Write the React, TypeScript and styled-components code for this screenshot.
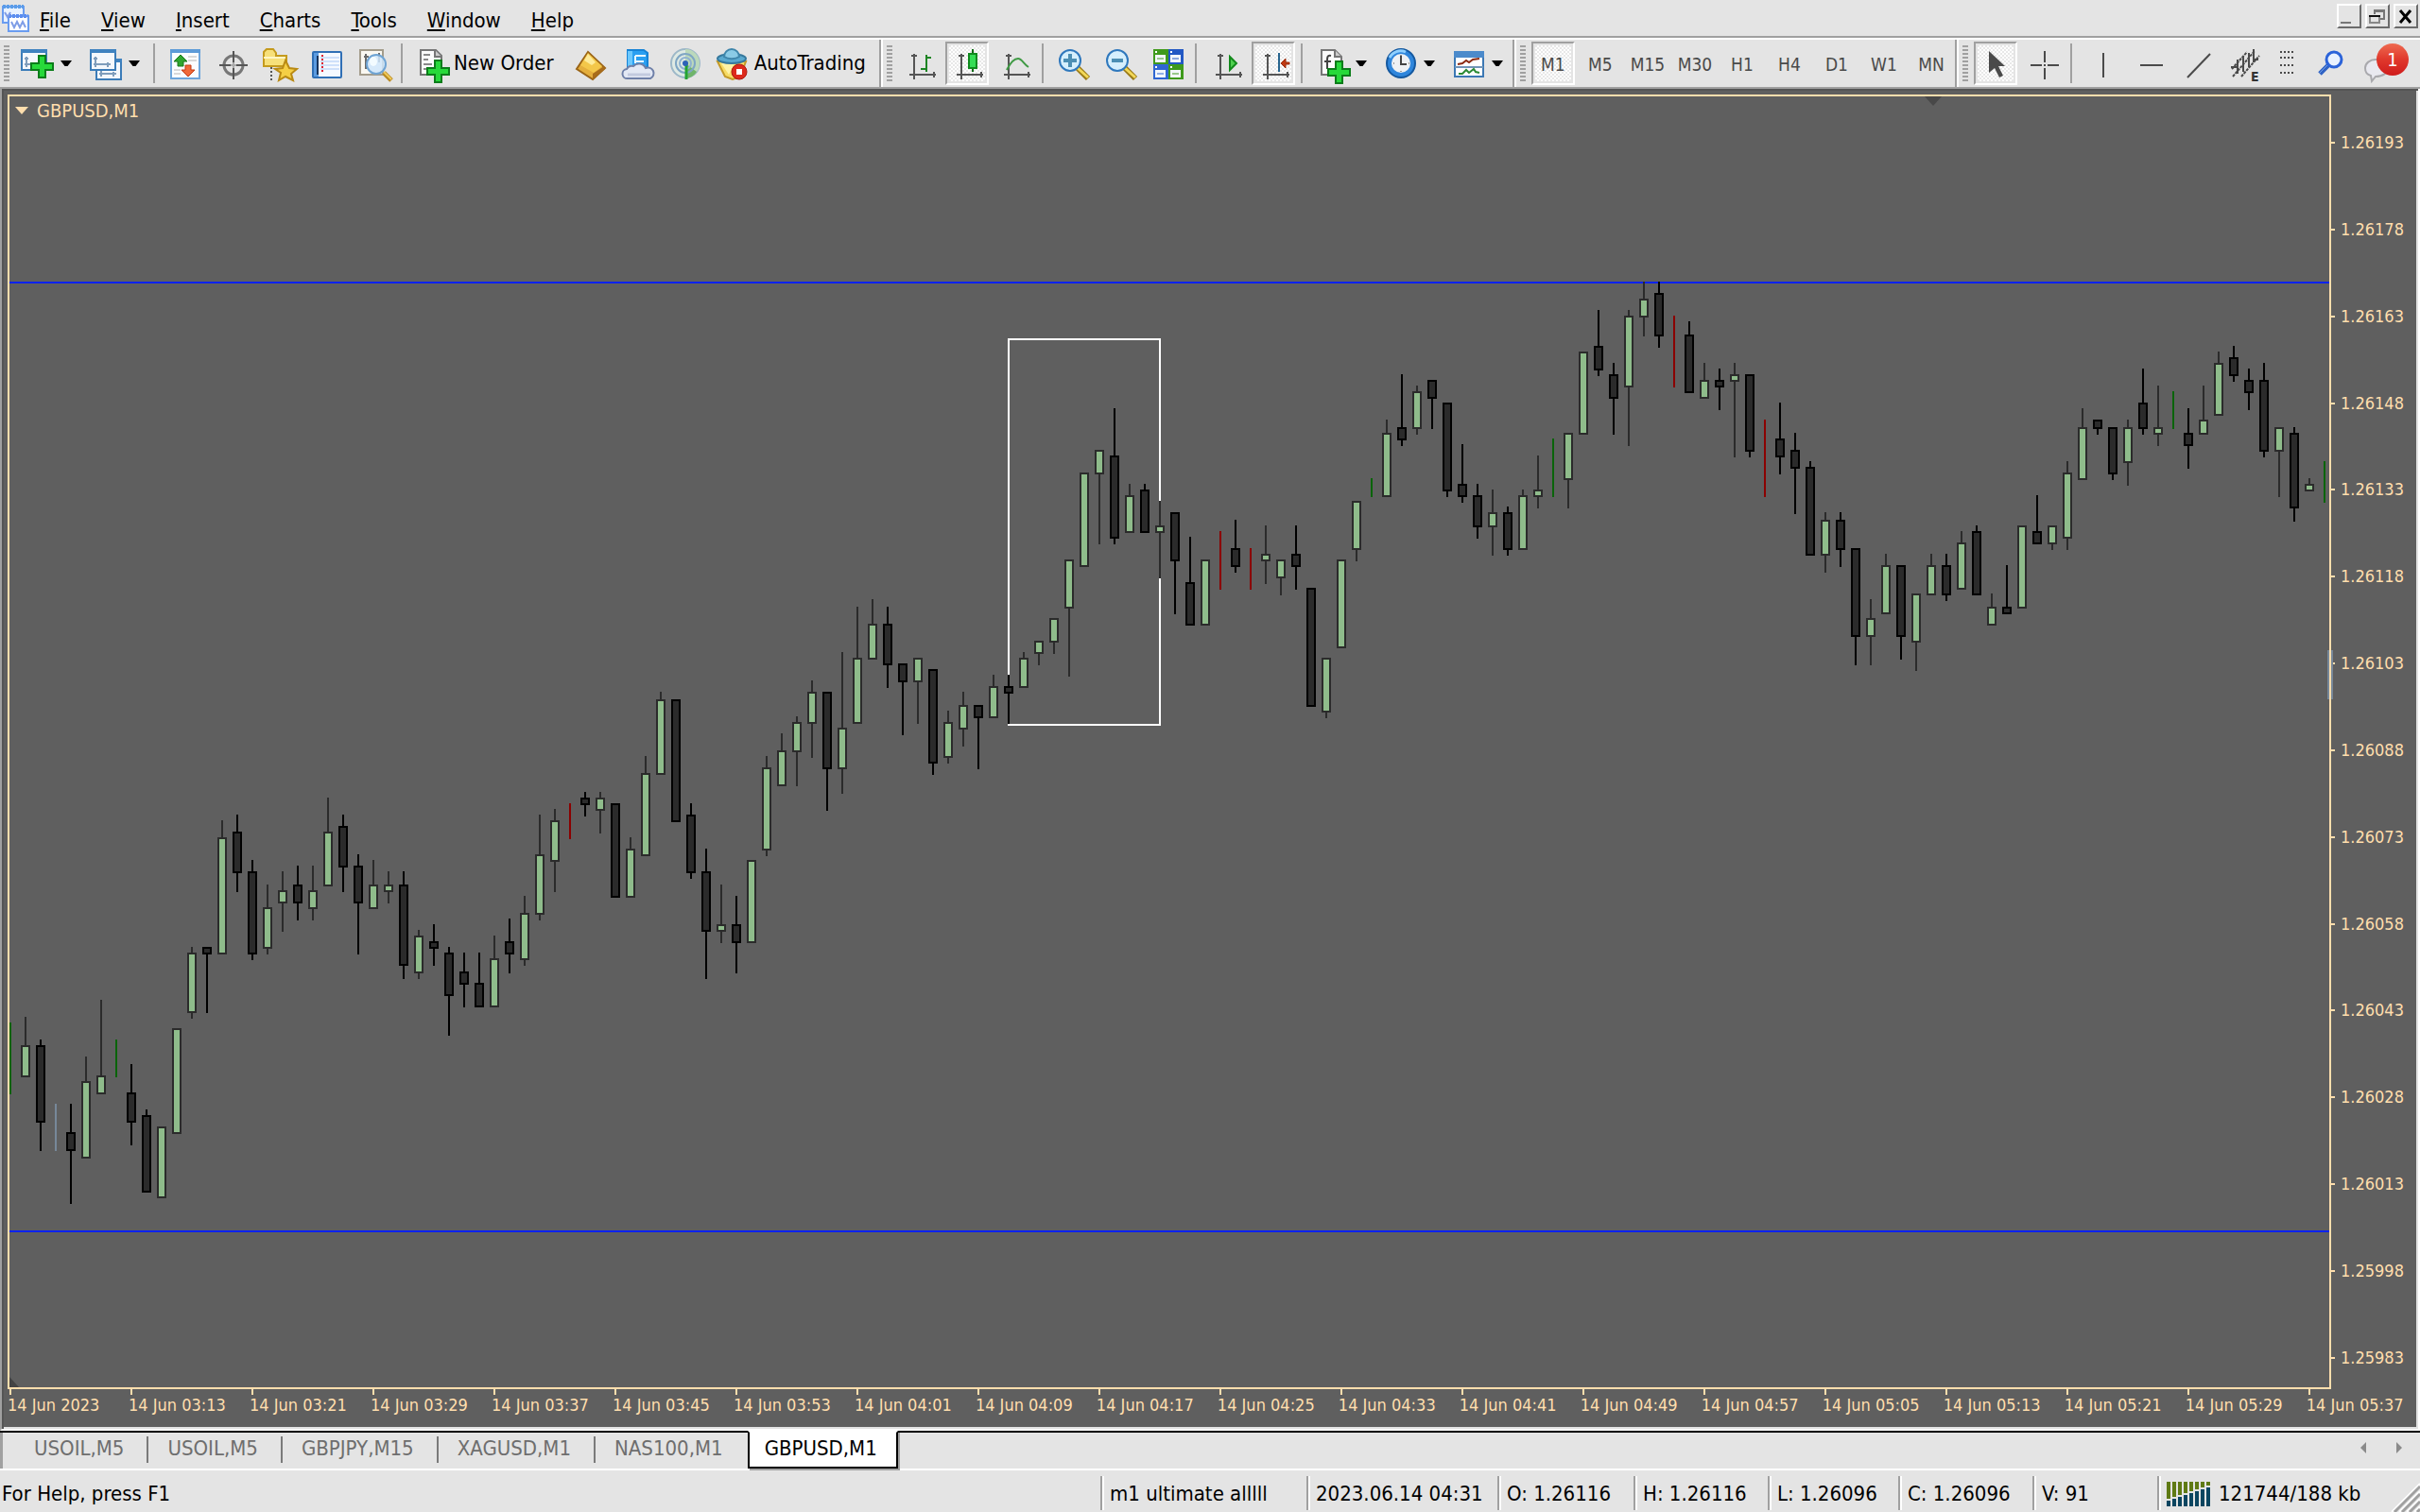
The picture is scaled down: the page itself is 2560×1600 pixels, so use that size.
import React from "react";
import styled, { createGlobalStyle, css } from "styled-components";

const C = {
  face: "#e4e4e4",
  shade: "#a0a0a0",
  chart: "#5f5f5f",
  axis: "#ffdead",
  blue: "#0c22f0",
  bull: "#8fbc8b",
  ink: "#2b2b2b",
};

const Global = createGlobalStyle`
  * { box-sizing: border-box; }
  html, body { margin: 0; height: 100%; }
  body { overflow: hidden; background: ${C.face}; }
  #root { height: 100%; }
  button { font: inherit; color: inherit; }
`;

const Terminal = styled.div`
  display: flex;
  flex-direction: column;
  height: 100vh;
  background: ${C.face};
  color: #000;
  font-family: "DejaVu Sans Condensed", "DejaVu Sans", sans-serif;
  font-size: 22px;
  line-height: 24px;
`;

/* ---------- menu bar ---------- */

const MenuBar = styled.header`
  display: flex;
  align-items: center;
  height: 42px;
  padding: 0 2px 0 1px;
  border-bottom: 2px solid #fff;
  box-shadow: inset 0 -2px 0 ${C.shade};
`;

const MenuList = styled.nav`
  display: flex;
  gap: 32px;
  margin-left: 11px;
  padding-top: 4px;
`;

const MenuItem = styled.button`
  padding: 0;
  border: 0;
  background: none;
  u {
    text-decoration-thickness: 2px;
    text-underline-offset: 2px;
    text-decoration-skip-ink: none;
  }
`;

const WindowButtons = styled.div`
  display: flex;
  gap: 4px;
  margin: 0 0 6px auto;
`;

const WindowButton = styled.button`
  width: 26px;
  height: 26px;
  padding: 0;
  border: 2px solid;
  border-color: #fff #6b6b6b #6b6b6b #fff;
  background: ${C.face};
  svg { display: block; }
`;

/* ---------- toolbar ---------- */

const ToolBar = styled.div`
  display: flex;
  align-items: center;
  height: 52px;
  border-bottom: 2px solid ${C.shade};
`;

const Group = styled.div<{ $last?: boolean }>`
  flex: none;
  display: flex;
  align-items: center;
  height: 50px;
  padding-left: 4px;
  ${(p) =>
    !p.$last &&
    css`
      border-right: 2px solid #fff;
      box-shadow: inset -2px 0 0 ${C.shade};
      padding-right: 2px;
    `}
`;

const Grip = styled.span`
  flex: none;
  width: 6px;
  height: 38px;
  margin-right: 4px;
  background: repeating-linear-gradient(${C.shade} 0 2px, transparent 2px 4px);
`;

const Divider = styled.span`
  flex: none;
  width: 2px;
  height: 42px;
  margin: 0 6px 0 4px;
  background: ${C.shade};
`;

const pressed = css`
  border-color: ${C.shade} #fff #fff ${C.shade};
  background: repeating-conic-gradient(#fff 0 25%, #e8e8e8 0 50%) 0 0 / 4px 4px;
  box-shadow: inset 0 0 0 2px ${C.face};
`;

const Tool = styled.button<{ $on?: boolean; $narrow?: boolean }>`
  flex: none;
  display: flex;
  align-items: center;
  justify-content: center;
  width: ${(p) => (p.$narrow ? 36 : 46)}px;
  height: 46px;
  margin: 0 2px;
  padding: 2px 0 0;
  border: 2px solid transparent;
  background: none;
  color: #4a4a4a;
  font-size: 19px;
  svg { margin-top: -2px; }
  ${(p) => p.$on && pressed}
`;

const DropTool = styled.button`
  flex: none;
  display: flex;
  align-items: center;
  gap: 4px;
  width: 72px;
  height: 46px;
  padding: 0 0 0 6px;
  border: 0;
  background: none;
`;

const TextTool = styled.button`
  flex: none;
  display: flex;
  align-items: center;
  height: 46px;
  padding: 0 14px 0 8px;
  border: 0;
  background: none;
`;

const Corner = styled.div`
  display: flex;
  align-items: center;
  margin-left: auto;
`;

const ChatTool = styled.button`
  position: relative;
  width: 70px;
  height: 46px;
  padding: 0 0 0 8px;
  border: 0;
  background: none;
  text-align: left;
`;

const Badge = styled.span`
  position: absolute;
  left: 24px;
  top: 2px;
  width: 34px;
  height: 34px;
  border-radius: 50%;
  background: linear-gradient(#ee6a50, #e0382c 50%, #cf1c1c);
  color: #fff;
  font-size: 20px;
  line-height: 34px;
  text-align: center;
`;

const Svg = styled.svg`
  flex: none;
  display: block;
  overflow: visible;
`;

/* ---------- chart ---------- */

const ChartWindow = styled.main`
  flex: 1;
  min-height: 0;
  display: grid;
  grid-template-columns: minmax(0, 1fr) 92px;
  grid-template-rows: minmax(0, 1fr) 42px;
  padding: 6px 0 0 4px;
  border: solid;
  border-width: 0 2px 2px 2px;
  border-color: #fff #fff #fff ${C.shade};
  background: ${C.chart};
  box-shadow: inset 2px 2px 0 #555, inset -2px -2px 0 #e3e3e3;
  color: ${C.axis};
  font-size: 18px;
`;

const Plot = styled.section`
  position: relative;
  z-index: 1;
  margin-left: 2px;
  border: 2px solid ${C.axis};
`;

const PlotSvg = styled.svg`
  display: block;
  width: 100%;
  height: 100%;
  overflow: visible;
`;

const PlotTitle = styled.h1`
  position: absolute;
  left: 6px;
  top: 3px;
  display: flex;
  align-items: center;
  gap: 9px;
  margin: 0;
  font-size: 20px;
  font-weight: 400;
  line-height: 24px;
`;

const PriceAxis = styled.ol`
  display: flex;
  flex-direction: column;
  justify-content: space-between;
  margin: 0;
  padding: 39px 0 21px;
  list-style: none;
`;

const Price = styled.li`
  display: flex;
  align-items: center;
  gap: 6px;
  height: 24px;
  &::before {
    content: "";
    width: 4px;
    height: 2px;
    background: ${C.axis};
  }
`;

const TimeAxis = styled.ol`
  grid-column: 1 / -1;
  display: flex;
  margin: 0;
  padding: 0 0 0 2px;
  list-style: none;
`;

const Time = styled.li`
  flex: 0 0 calc((100% - 96px) * 128 / 2454);
  line-height: 22px;
  white-space: nowrap;
  &:last-child { flex-basis: auto; }
  &::before {
    content: "";
    display: block;
    width: 2px;
    height: 6px;
    margin-left: 2px;
    background: ${C.axis};
  }
`;

/* ---------- tabs and status ---------- */

const TabBar = styled.div`
  display: flex;
  align-items: flex-start;
  height: 42px;
  padding: 0 14px 0 16px;
  border-top: 2px solid #000;
  border-bottom: 2px solid #fff;
  box-shadow: inset 4px 0 0 -1px ${C.shade};
`;

const Tab = styled.button<{ $active?: boolean; $rule?: boolean }>`
  height: 28px;
  margin-top: 4px;
  padding: 0 24px 2px 20px;
  border: 0;
  border-right: 2px solid ${(p) => (p.$rule ? "#7a7a7a" : "transparent")};
  background: none;
  color: #6e6e6e;
  line-height: 24px;
  ${(p) =>
    p.$active &&
    css`
      height: 40px;
      margin-top: -2px;
      padding: 4px 20px 6px 16px;
      border: 2px solid #000;
      border-top-color: #fff;
      background: #fff;
      color: #000;
      box-shadow: 2px 2px 0 ${C.shade};
    `}
`;

const Pager = styled.div`
  display: flex;
  gap: 22px;
  margin-left: auto;
  padding-top: 10px;
`;

const PagerButton = styled.button`
  width: 16px;
  height: 12px;
  padding: 0;
  border: 0;
  background: none;
  display: flex;
  justify-content: center;
`;

const StatusBar = styled.footer`
  display: flex;
  align-items: center;
  height: 44px;
  padding-left: 2px;
`;

const StatusCell = styled.span<{ $w: number }>`
  flex: none;
  display: flex;
  align-items: center;
  gap: 9px;
  width: ${(p) => p.$w}px;
  height: 36px;
  margin-top: 4px;
  padding: 2px 0 0 8px;
  border-left: 2px solid ${C.shade};
  box-shadow: inset 2px 0 0 #fff;
  white-space: nowrap;
`;

const StatusHint = styled.span`
  flex: 1;
  padding-top: 6px;
`;

const SizeGrip = styled(Svg)`
  align-self: flex-end;
  margin-left: auto;
`;

/* ---------- data ---------- */

type Bar = [string, number, number, number, number];

/* u: rising, d: falling, G/R/S: plain line in green, red, slate.
   [kind, high, body top, body bottom, low] */
const bars: Bar[] = [
  ["G", 541, 0, 0, 579], ["u", 538, 553, 570, 570], ["d", 550, 553, 594, 609], ["S", 584, 0, 0, 609],
  ["d", 584, 599, 609, 637], ["u", 559, 572, 613, 613], ["u", 529, 569, 579, 579], ["G", 550, 0, 0, 570],
  ["d", 563, 578, 594, 606], ["d", 587, 590, 631, 631], ["u", 596, 596, 634, 634], ["u", 544, 544, 600, 600],
  ["u", 501, 504, 536, 539], ["d", 501, 501, 505, 536], ["u", 434, 443, 505, 505], ["d", 431, 440, 462, 472],
  ["d", 455, 461, 505, 508], ["u", 468, 480, 502, 505], ["u", 461, 471, 478, 493], ["d", 458, 468, 478, 487],
  ["u", 458, 471, 481, 487], ["u", 422, 440, 469, 469], ["d", 431, 437, 459, 472], ["d", 452, 458, 478, 505],
  ["u", 455, 468, 481, 481], ["u", 461, 468, 472, 478], ["d", 461, 468, 511, 518], ["u", 492, 495, 515, 518],
  ["d", 489, 498, 502, 511], ["d", 501, 504, 527, 548], ["d", 504, 514, 521, 533], ["d", 504, 520, 533, 533],
  ["u", 495, 507, 533, 533], ["d", 486, 498, 505, 515], ["u", 474, 483, 508, 511], ["u", 431, 452, 484, 487],
  ["u", 428, 434, 456, 472], ["R", 425, 0, 0, 444], ["d", 419, 422, 426, 432], ["u", 419, 422, 429, 441],
  ["d", 425, 425, 475, 475], ["u", 443, 449, 475, 475], ["u", 400, 409, 453, 453], ["u", 366, 370, 410, 410],
  ["d", 370, 370, 435, 435], ["d", 425, 431, 462, 465], ["d", 449, 461, 493, 518], ["u", 468, 489, 493, 499],
  ["d", 474, 489, 499, 515], ["u", 455, 455, 499, 499], ["u", 400, 406, 450, 453], ["u", 388, 397, 416, 416],
  ["u", 379, 382, 398, 416], ["u", 360, 366, 383, 401], ["d", 366, 366, 407, 429], ["u", 345, 385, 407, 420],
  ["u", 321, 348, 383, 383], ["u", 317, 330, 349, 349], ["d", 321, 330, 352, 364], ["d", 351, 351, 361, 389],
  ["u", 348, 348, 361, 383], ["d", 354, 354, 404, 410], ["u", 376, 382, 401, 404], ["u", 366, 373, 386, 395],
  ["d", 373, 373, 380, 407], ["u", 357, 363, 380, 380], ["d", 357, 363, 367, 383], ["u", 345, 348, 364, 364],
  ["u", 339, 339, 346, 352], ["u", 327, 327, 340, 346], ["u", 296, 296, 322, 358], ["u", 250, 250, 300, 300],
  ["u", 238, 238, 251, 288], ["d", 216, 241, 285, 288], ["u", 256, 262, 282, 282], ["d", 256, 259, 282, 282],
  ["u", 265, 278, 282, 306], ["d", 271, 271, 297, 325], ["d", 284, 308, 331, 331], ["u", 296, 296, 331, 331],
  ["R", 281, 0, 0, 312], ["d", 275, 290, 300, 303], ["R", 290, 0, 0, 312], ["u", 278, 293, 297, 309],
  ["u", 296, 296, 306, 315], ["d", 278, 293, 300, 312], ["d", 311, 311, 374, 374], ["u", 348, 348, 377, 380],
  ["u", 296, 296, 343, 343], ["u", 265, 265, 291, 297], ["G", 253, 0, 0, 263], ["u", 222, 229, 263, 263],
  ["d", 198, 226, 233, 236], ["u", 204, 207, 227, 230], ["d", 201, 201, 211, 227], ["d", 213, 213, 260, 263],
  ["d", 235, 256, 263, 266], ["d", 256, 262, 279, 285], ["u", 259, 271, 279, 294], ["d", 268, 271, 291, 294],
  ["u", 259, 262, 291, 291], ["u", 241, 259, 263, 269], ["G", 232, 0, 0, 263], ["u", 229, 229, 254, 269],
  ["u", 186, 186, 230, 230], ["d", 164, 183, 196, 199], ["d", 192, 198, 211, 230], ["u", 164, 167, 205, 236],
  ["u", 149, 158, 168, 178], ["d", 149, 155, 178, 184], ["R", 167, 0, 0, 205], ["d", 170, 177, 208, 208],
  ["u", 192, 201, 211, 211], ["d", 195, 201, 205, 217], ["u", 192, 198, 202, 242], ["d", 198, 198, 239, 242],
  ["R", 222, 0, 0, 263], ["d", 213, 232, 242, 251], ["d", 229, 238, 248, 272], ["d", 244, 247, 294, 294],
  ["u", 271, 275, 294, 303], ["d", 271, 275, 291, 300], ["d", 290, 290, 337, 352], ["u", 317, 327, 337, 352],
  ["u", 293, 299, 325, 325], ["d", 299, 299, 337, 349], ["u", 314, 314, 340, 355], ["u", 293, 299, 315, 315],
  ["d", 293, 299, 315, 318], ["u", 281, 287, 312, 312], ["d", 278, 281, 315, 315], ["u", 314, 321, 331, 331],
  ["d", 299, 321, 325, 325], ["u", 278, 278, 322, 322], ["d", 262, 281, 288, 288], ["u", 278, 278, 288, 291],
  ["u", 244, 250, 285, 291], ["u", 216, 226, 254, 254], ["d", 222, 222, 227, 230], ["d", 226, 226, 251, 254],
  ["u", 222, 226, 245, 257], ["d", 195, 213, 227, 230], ["u", 204, 226, 230, 236], ["G", 207, 0, 0, 227],
  ["d", 216, 229, 236, 248], ["u", 204, 222, 230, 230], ["u", 186, 192, 220, 220], ["d", 183, 189, 199, 202],
  ["d", 195, 201, 208, 217], ["d", 192, 201, 239, 242], ["u", 226, 226, 239, 263], ["d", 226, 229, 269, 276],
  ["u", 253, 256, 260, 260], ["G", 244, 0, 0, 266],
];

const lineColor: Record<string, string> = { G: "#0a640a", R: "#8b0000", S: "#778899", u: C.ink, d: "#000" };

const prices = Array.from({ length: 15 }, (_, i) => ((126193 - 15 * i) / 100000).toFixed(5));

const times = Array.from({ length: 20 }, (_, i) => {
  if (i === 0) return "14 Jun 2023";
  const m = 185 + 8 * i;
  return `14 Jun 0${Math.floor(m / 60)}:${String(m % 60).padStart(2, "0")}`;
});

const menus = ["File", "View", "Insert", "Charts", "Tools", "Window", "Help"];
const frames = ["M1", "M5", "M15", "M30", "H1", "H4", "D1", "W1", "MN"];
const tabs = ["USOIL,M5", "USOIL,M5", "GBPJPY,M15", "XAGUSD,M1", "NAS100,M1", "GBPUSD,M1"];
const cells: [string, number][] = [
  ["m1 ultimate alllll", 218],
  ["2023.06.14 04:31", 202],
  ["O: 1.26116", 144],
  ["H: 1.26116", 142],
  ["L: 1.26096", 138],
  ["C: 1.26096", 142],
  ["V: 91", 132],
];

/* ---------- icons ---------- */

const Icon = ({ children }: { children: React.ReactNode }) => (
  <Svg width="40" height="40" viewBox="0 0 40 40" fill="none" aria-hidden="true">
    {children}
  </Svg>
);

const Caret = () => (
  <Svg width="12" height="6" viewBox="0 0 12 6" aria-hidden="true">
    <path d="M0 0h12l-4.500 6h-3z" fill="#000" />
  </Svg>
);

const Plus = ({ x, y }: { x: number; y: number }) => (
  <path
    transform={`translate(${x} ${y})`}
    d="M8 1h7v8h8v7h-8v8H8v-8H0V9h8z"
    fill="#27d93a"
    stroke="#0b7d1a"
    strokeWidth="2"
  />
);

const Pane = ({ x, y }: { x: number; y: number }) => (
  <g transform={`translate(${x} ${y})`}>
    <rect x="1" y="1" width="26" height="21" fill="#f4f8fc" stroke="#3b7cb8" strokeWidth="2" />
    <rect x="0" y="0" width="28" height="4" fill="#3f83c0" />
    <path d="M6 8v11M4 10h4M4 16h18M19 14v5" stroke="#7f9dbb" strokeWidth="2" />
  </g>
);

const Axes = () => (
  <g stroke="#555" strokeWidth="2">
    <path d="M14 10v27M9 32h28" />
    <path d="M11 12h6M35 29v6" />
  </g>
);

const NewChart = () => (
  <Icon>
    <Pane x={2} y={5} />
    <Plus x={13} y={11} />
  </Icon>
);

const Profiles = () => (
  <Icon>
    <Pane x={9} y={15} />
    <Pane x={3} y={5} />
  </Icon>
);

const MarketWatch = () => (
  <Icon>
    <rect x="6" y="6" width="30" height="30" fill="#fbfdff" stroke="#6ea6dc" strokeWidth="2" />
    <rect x="5" y="5" width="32" height="4" fill="#5d9bd8" />
    <path d="M24 13h9M24 17h9M9 27h7M9 31h7" stroke="#d9d9d9" strokeWidth="2" />
    <path d="M16 11l7 7h-4v5h-6v-5H9z" fill="#2fa52f" stroke="#187818" />
    <path d="M24 34l7-7h-4v-5h-6v5h-4z" fill="#f0693a" stroke="#c23a12" />
  </Icon>
);

const Navigator = () => (
  <Icon>
    <circle cx="22" cy="22" r="10" stroke="#777" strokeWidth="3" />
    <path d="M22 7v12M22 25v12M7 22h12M25 22h12" stroke="#555" strokeWidth="2" />
    <path d="M19 22h6M22 19v6" stroke="#aaa" strokeWidth="2" />
  </Icon>
);

const Folder = () => (
  <Icon>
    <path d="M12 24v14" stroke="#555" strokeWidth="2" strokeDasharray="2 2" />
    <path d="M4 23V8l3-3h7l3 4v3h11v11z" fill="#f7e07a" stroke="#c59b1d" strokeWidth="2" />
    <path d="M4 14h23" stroke="#fff6c4" strokeWidth="2" />
    <path d="M27 17l4 8 8 1-6 5 2 7-8-4-7 4 2-8-6-4 8-1z" fill="#f5cf45" stroke="#b98a14" strokeWidth="2" />
  </Icon>
);

const DataWindow = () => (
  <Icon>
    <rect x="6" y="8" width="30" height="27" rx="1" fill="#f5f9ff" stroke="#2f6fb5" strokeWidth="2" />
    <rect x="7" y="9" width="5" height="25" fill="#5b9be0" />
    <path d="M14 14h20M14 18h20M14 22h20M14 26h20" stroke="#cfe0fa" strokeWidth="2" />
    <path d="M16 11v18" stroke="#d23" strokeWidth="2" strokeDasharray="2 2" />
    <path d="M11 12v20" stroke="#16335c" strokeWidth="2" />
  </Icon>
);

const Tester = () => (
  <Icon>
    <rect x="6" y="6" width="24" height="26" fill="#faf8f2" stroke="#a39c8b" strokeWidth="2" />
    <path d="M12 10v16M26 9v10M10 13h5" stroke="#6a6a6a" strokeWidth="2" />
    <path d="M31 30l8 8" stroke="#b88a22" strokeWidth="5" />
    <path d="M31 29l8 8" stroke="#f0c95a" strokeWidth="2" />
    <circle cx="23" cy="21" r="10" fill="#cfe6fb" fillOpacity=".85" stroke="#6fa4d4" strokeWidth="2" />
    <ellipse cx="20" cy="18" rx="4" ry="5" fill="#f3fbff" />
  </Icon>
);

const NewOrder = () => (
  <Icon>
    <path d="M5 6h16l6 6v20H5z" fill="#fcfcfc" stroke="#777" strokeWidth="2" />
    <path d="M20 6v7h7" fill="#ccc" stroke="#777" strokeWidth="2" />
    <path d="M8 11h7M8 16h5M8 21h9M8 26h4" stroke="#8a8a8a" strokeWidth="2" />
    <Plus x={12} y={16} />
  </Icon>
);

const Gold = () => (
  <Icon>
    <path d="M17 8l18 17-13 12L5 26z" fill="#e4ae3c" stroke="#9a6416" strokeWidth="2" />
    <path d="M17 9l15 14-9 7L9 22z" fill="#f3c74a" />
    <path d="M17 10l8 9-4 3-8-5z" fill="#fdeb9a" />
    <path d="M22 31l12-8 1 3-13 11z" fill="#a86c1b" />
  </Icon>
);

const Server = () => (
  <Icon>
    <path d="M9 6h17l4 3v15H9z" fill="#2aa0f2" stroke="#1683d6" strokeWidth="2" />
    <path d="M9 7h5v17H9z" fill="#6cc8fd" />
    <path d="M17 12h11M17 18h9M17 12v8" stroke="#e6f7ff" strokeWidth="2" />
    <path
      d="M9 36a5 5 0 01-1-10 6 6 0 017-3 8 8 0 0113 2 6 6 0 015 11z"
      fill="#e3e8f4"
      stroke="#6f80a8"
      strokeWidth="2"
    />
    <path d="M9 32h24" stroke="#c2cade" strokeWidth="3" />
  </Icon>
);

const Signal = () => (
  <Icon>
    <circle cx="20" cy="20" r="15" fill="#dfeae4" stroke="#9db8c8" strokeWidth="2" />
    <path d="M20 5a15 15 0 010 30z" fill="#bcd9bb" />
    <path d="M20 20l12 9a15 15 0 01-12 7z" fill="#6fb56a" />
    <circle cx="20" cy="20" r="10" stroke="#7fa6c4" strokeWidth="2" />
    <circle cx="20" cy="20" r="6" stroke="#8fb2d0" strokeWidth="2" />
    <path d="M21 20v17" stroke="#23a432" strokeWidth="3" />
    <circle cx="20" cy="20" r="3" fill="#2d62b8" />
  </Icon>
);

const AutoTrade = () => (
  <Icon>
    <path d="M1 18h30l-6 16-8 3-8-3z" fill="#f7dc64" stroke="#c49a28" strokeWidth="2" />
    <path d="M5 20h14l-6 12z" fill="#fdf2a6" />
    <ellipse cx="16" cy="15" rx="15" ry="5" fill="#5aa9cf" stroke="#35789c" strokeWidth="2" />
    <path d="M8 13a8 8 0 0116 0c-4 3-12 3-16 0z" fill="#8bcbe6" stroke="#3f86ab" strokeWidth="2" />
    <circle cx="24" cy="29" r="8" fill="#dd2a1c" stroke="#ab1810" />
    <rect x="21" y="26" width="6" height="6" fill="#fff" />
  </Icon>
);

const BarsIcon = () => (
  <Icon>
    <Axes />
    <path d="M27 11v18M27 14h5M21 26h6" stroke="#1d8423" strokeWidth="2" />
  </Icon>
);

const CandleIcon = () => (
  <Icon>
    <Axes />
    <path d="M26 5v24" stroke="#0d6c14" strokeWidth="2" />
    <rect x="22" y="10" width="8" height="15" fill="#35dd55" stroke="#108a1e" strokeWidth="2" />
  </Icon>
);

const LineIcon = () => (
  <Icon>
    <Axes />
    <path d="M12 27c4-8 8-12 12-12s6 6 11 9" stroke="#3f9a44" strokeWidth="2" />
  </Icon>
);

const Zoom = ({ plus }: { plus?: boolean }) => (
  <Icon>
    <path d="M25 25l11 11" stroke="#9a7a16" strokeWidth="6" />
    <path d="M25 25l11 10" stroke="#f3d858" strokeWidth="3" />
    <circle cx="17" cy="17" r="11" fill="#d5effd" stroke="#2f78bd" strokeWidth="2" />
    <path d={plus ? "M10 17h14M17 10v14" : "M11 17h12"} stroke="#4c8fb4" strokeWidth="4" />
  </Icon>
);

const Tile = () => (
  <Icon>
    {[
      [5, 5, "#3f9a1c"],
      [21, 5, "#2258c4"],
      [5, 21, "#2f66d2"],
      [21, 21, "#3f9a1c"],
    ].map(([x, y, f]) => (
      <g key={`${x}-${y}`} transform={`translate(${x} ${y})`}>
        <rect width="16" height="16" fill={f as string} />
        <rect x="2" y="6" width="11" height="8" fill="#f2f6fb" />
        <path d="M4 10h7" stroke={f as string} strokeOpacity=".5" strokeWidth="2" />
        <path d="M2 3h2" stroke="#fff" strokeWidth="2" />
      </g>
    ))}
  </Icon>
);

const ScrollIcon = () => (
  <Icon>
    <Axes />
    <path d="M24 13l7 7-7 7z" fill="#4fd04f" stroke="#138a1c" strokeWidth="2" />
  </Icon>
);

const ShiftIcon = () => (
  <Icon>
    <Axes />
    <path d="M26 9v20" stroke="#28658f" strokeWidth="2" />
    <path d="M28 20l5-5v4h4v2h-4v4z" fill="#c03a12" stroke="#9c2c0a" />
  </Icon>
);

const Indicator = () => (
  <Icon>
    <path d="M8 6h14l7 7v19H8z" fill="#fcfcfc" stroke="#777" strokeWidth="2" />
    <path d="M22 6v7h7" fill="#ccc" stroke="#777" strokeWidth="2" />
    <path d="M18 12c-4-1-4 2-4 5v9M11 18h7" stroke="#444" strokeWidth="2" />
    <Plus x={15} y={17} />
  </Icon>
);

const Clock = () => (
  <Icon>
    <circle cx="20" cy="20" r="15" fill="#2f86dc" stroke="#14589f" strokeWidth="2" />
    <path d="M8 14a13 13 0 0117-6" stroke="#8fd0ff" strokeWidth="3" />
    <circle cx="20" cy="20" r="10" fill="#eef1f4" />
    <path d="M20 12v9h6" stroke="#444" strokeWidth="2" />
    <path d="M20 11v1M20 28v1M12 20h1M28 20h1" stroke="#999" strokeWidth="2" />
  </Icon>
);

const Template = () => (
  <Icon>
    <rect x="5" y="8" width="30" height="26" fill="#fff" stroke="#3c78b4" strokeWidth="2" />
    <rect x="4" y="7" width="32" height="7" fill="#4b8acb" />
    <path d="M5 24h30" stroke="#7295b8" strokeWidth="2" />
    <path d="M8 21l5-1 4-3 3 2 4-3 7-1" stroke="#8c2b12" strokeWidth="2" />
    <path d="M9 31h4l4-4 3 3 5-4 2 3 4 1" stroke="#2c8a34" strokeWidth="2" />
  </Icon>
);

const Cursor = () => (
  <Icon>
    <path d="M13 7v23l6-5 5 10 4-2-5-10h7z" fill="#4a4a4a" />
  </Icon>
);

const Cross = () => (
  <Icon>
    <path d="M22 7v12M22 25v12M7 22h12M25 22h12M21 22h2" stroke="#4a4a4a" strokeWidth="2" />
  </Icon>
);

const VLine = () => (
  <Icon>
    <path d="M22 9v26" stroke="#4a4a4a" strokeWidth="2" />
  </Icon>
);

const HLine = () => (
  <Icon>
    <path d="M11 22h24" stroke="#4a4a4a" strokeWidth="2" />
  </Icon>
);

const Trend = () => (
  <Icon>
    <path d="M11 35l24-25" stroke="#4a4a4a" strokeWidth="2" />
  </Icon>
);

const Channel = () => (
  <Icon>
    <path d="M8 26L24 8M9 34L32 7M18 34L37 12" stroke="#4a4a4a" strokeWidth="2" strokeDasharray="3 1" />
    <path d="M14 16v15M20 13v16M26 9v15M31 5v14M7 24h7M30 16h6" stroke="#4a4a4a" strokeWidth="2" />
    <text x="28" y="39" fontSize="14" fontWeight="700" fill="#333">E</text>
  </Icon>
);

const Fibo = () => (
  <Icon>
    <path
      d="M14 8h14M14 14h14M14 22h14M14 30h14"
      stroke="#4a4a4a"
      strokeWidth="2"
      strokeDasharray="2 2"
    />
  </Icon>
);

const Search = () => (
  <Icon>
    <path d="M18 22L9 31" stroke="#2f62c4" strokeWidth="5" />
    <path d="M18 21l-9 9" stroke="#6f9ee8" strokeWidth="1" />
    <circle cx="24" cy="16" r="8" fill="#e8f1ff" stroke="#2b63d9" strokeWidth="3" />
  </Icon>
);

const Bubble = () => (
  <Icon>
    <path
      d="M15 16c8 0 13 4 13 9s-5 9-13 9l-4 5-1-6c-4-1-6-4-6-8 0-5 5-9 11-9z"
      fill="#e9e9f0"
      stroke="#a9a9ad"
      strokeWidth="2"
    />
  </Icon>
);

const AppMark = () => (
  <Svg width="30" height="30" viewBox="0 0 30 30" fill="none" aria-hidden="true">
    <rect x="2" y="2" width="22" height="17" fill="#e8f2ff" stroke="#6a9cf0" strokeWidth="2" />
    <path d="M2 2h22" stroke="#5a9de8" strokeWidth="4" strokeDasharray="3 1" />
    <rect x="8" y="12" width="21" height="16" fill="#fff" stroke="#6a9cf0" strokeWidth="2" />
    <path d="M8 12h21" stroke="#5b8def" strokeWidth="4" strokeDasharray="3 1" />
    <path d="M11 18l3 6 3-6 3 6 3-6 3 6M4 8l3 5 3-5" stroke="#7f9de6" strokeWidth="2" />
  </Svg>
);

const Traffic = () => (
  <Svg width="46" height="26" viewBox="0 0 46 26" aria-hidden="true">
    {Array.from({ length: 8 }, (_, i) => (
      <g key={i}>
        <rect x={i * 6} y="0" width="4" height={18 - 2 * i} fill="#5f7a14" />
        <rect x={i * 6} y={20 - 2 * i} width="4" height={6 + 2 * i} fill="#0b4560" />
      </g>
    ))}
  </Svg>
);

/* ---------- chart drawing ---------- */

const Candle = ({ bar, index }: { bar: Bar; index: number }) => {
  const [kind, high, top, bottom, low] = bar;
  const x = index * 16;
  const y = (v: number) => v * 2 - 102;
  return (
    <g>
      <rect x={x} y={y(high)} width="2" height={(low - high) * 2} fill={lineColor[kind]} />
      {top > 0 && (
        <rect
          x={x - 3}
          y={y(top) + 1}
          width="8"
          height={(bottom - top) * 2 - 2}
          fill={kind === "u" ? C.bull : C.ink}
          stroke={lineColor[kind]}
          strokeWidth="2"
        />
      )}
    </g>
  );
};

const Drawing = () => (
  <PlotSvg viewBox="0 0 2454 1366" preserveAspectRatio="none" role="img" aria-label="GBPUSD one minute candles">
    <rect x="0" y="196" width="2454" height="2" fill={C.blue} />
    <rect x="0" y="1200" width="2454" height="2" fill={C.blue} />
    <rect x="1057" y="257" width="160" height="408" fill="none" stroke="#fff" strokeWidth="2" />
    {bars.map((b, i) => (
      <Candle key={i} bar={b} index={i} />
    ))}
    <path d="M2026 0h18l-9 10z" fill="#484848" />
    <path d="M0 1355v11h10z" fill="#444" />
    <rect x="2452" y="586" width="6" height="52" fill="#778899" />
    <rect x="2454" y="586" width="2" height="52" fill={C.axis} />
  </PlotSvg>
);

export default function App() {
  return (
    <Terminal>
      <Global />
      <MenuBar>
        <AppMark />
        <MenuList>
          {menus.map((m) => (
            <MenuItem key={m}>
              <u>{m[0]}</u>
              {m.slice(1)}
            </MenuItem>
          ))}
        </MenuList>
        <WindowButtons>
          <WindowButton aria-label="Minimize">
            <Svg width="22" height="22" viewBox="0 0 22 22">
              <path d="M2 17h11v2H2z" fill="#777" />
            </Svg>
          </WindowButton>
          <WindowButton aria-label="Restore">
            <Svg width="22" height="22" viewBox="0 0 22 22" fill="none">
              <path d="M8 9V5h10v9h-4" stroke="#777" strokeWidth="2" />
              <path d="M7 4h12v3H7z" fill="#777" />
              <rect x="3" y="11" width="10" height="7" stroke="#888" strokeWidth="2" />
              <path d="M2 10h12v2H2z" fill="#111" />
            </Svg>
          </WindowButton>
          <WindowButton aria-label="Close">
            <Svg width="22" height="22" viewBox="0 0 22 22">
              <path d="M5 5l11 13M16 5L5 18" stroke="#000" strokeWidth="3" />
            </Svg>
          </WindowButton>
        </WindowButtons>
      </MenuBar>

      <ToolBar>
        <Group>
          <Grip />
          <DropTool aria-label="New chart"><NewChart /><Caret /></DropTool>
          <DropTool aria-label="Profiles"><Profiles /><Caret /></DropTool>
          <Divider />
          <Tool aria-label="Market watch"><MarketWatch /></Tool>
          <Tool aria-label="Data window"><Navigator /></Tool>
          <Tool aria-label="Navigator"><Folder /></Tool>
          <Tool aria-label="Terminal"><DataWindow /></Tool>
          <Tool aria-label="Strategy tester"><Tester /></Tool>
          <Divider />
          <TextTool><NewOrder />New Order</TextTool>
          <Tool aria-label="MetaEditor"><Gold /></Tool>
          <Tool aria-label="Virtual hosting"><Server /></Tool>
          <Tool aria-label="Signals"><Signal /></Tool>
          <TextTool><AutoTrade />AutoTrading</TextTool>
        </Group>
        <Group>
          <Grip />
          <Tool aria-label="Bar chart"><BarsIcon /></Tool>
          <Tool $on aria-label="Candlesticks"><CandleIcon /></Tool>
          <Tool aria-label="Line chart"><LineIcon /></Tool>
          <Divider />
          <Tool aria-label="Zoom in"><Zoom plus /></Tool>
          <Tool aria-label="Zoom out"><Zoom /></Tool>
          <Tool aria-label="Tile windows"><Tile /></Tool>
          <Divider />
          <Tool aria-label="Auto scroll"><ScrollIcon /></Tool>
          <Tool $on aria-label="Chart shift"><ShiftIcon /></Tool>
          <Divider />
          <DropTool aria-label="Indicators"><Indicator /><Caret /></DropTool>
          <DropTool aria-label="Periods"><Clock /><Caret /></DropTool>
          <DropTool aria-label="Templates"><Template /><Caret /></DropTool>
        </Group>
        <Group>
          <Grip />
          {frames.map((f, i) => (
            <Tool key={f} $on={i === 0}>{f}</Tool>
          ))}
        </Group>
        <Group $last>
          <Grip />
          <Tool $on aria-label="Cursor"><Cursor /></Tool>
          <Tool aria-label="Crosshair"><Cross /></Tool>
          <Divider />
          <Tool aria-label="Vertical line"><VLine /></Tool>
          <Tool aria-label="Horizontal line"><HLine /></Tool>
          <Tool aria-label="Trendline"><Trend /></Tool>
          <Tool aria-label="Equidistant channel"><Channel /></Tool>
          <Tool $narrow aria-label="Fibonacci retracement"><Fibo /></Tool>
        </Group>
        <Corner>
          <Tool aria-label="Search"><Search /></Tool>
          <ChatTool aria-label="Messages">
            <Bubble />
            <Badge>1</Badge>
          </ChatTool>
        </Corner>
      </ToolBar>

      <ChartWindow>
        <Plot>
          <Drawing />
          <PlotTitle>
            <Svg width="14" height="8" viewBox="0 0 14 8" aria-hidden="true">
              <path d="M0 0h14L7 8z" fill={C.axis} />
            </Svg>
            GBPUSD,M1
          </PlotTitle>
        </Plot>
        <PriceAxis>
          {prices.map((p) => (
            <Price key={p}>{p}</Price>
          ))}
        </PriceAxis>
        <TimeAxis>
          {times.map((t) => (
            <Time key={t}>{t}</Time>
          ))}
        </TimeAxis>
      </ChartWindow>

      <TabBar>
        {tabs.map((t, i) => (
          <Tab key={i} $active={i === 5} $rule={i < 4}>{t}</Tab>
        ))}
        <Pager>
          <PagerButton aria-label="Previous tabs">
            <Svg width="6" height="12" viewBox="0 0 6 12"><path d="M6 0v12L0 6z" fill="#8a8a8a" /></Svg>
          </PagerButton>
          <PagerButton aria-label="Next tabs">
            <Svg width="6" height="12" viewBox="0 0 6 12"><path d="M0 0v12l6-6z" fill="#8a8a8a" /></Svg>
          </PagerButton>
        </Pager>
      </TabBar>

      <StatusBar>
        <StatusHint>For Help, press F1</StatusHint>
        {cells.map(([t, w]) => (
          <StatusCell key={t} $w={w}>{t}</StatusCell>
        ))}
        <StatusCell $w={246}>
          <Traffic />
          121744/188 kb
        </StatusCell>
        <SizeGrip width="32" height="32" viewBox="0 0 32 32" aria-hidden="true">
          <path d="M2 32L32 2M10 32L32 10M18 32l14-14M26 32l6-6" stroke="#fff" strokeWidth="2" />
          <path d="M5 32L32 5M13 32l19-19M21 32l11-11M29 32l3-3" stroke="#a0a0a0" strokeWidth="3" />
        </SizeGrip>
      </StatusBar>
    </Terminal>
  );
}
